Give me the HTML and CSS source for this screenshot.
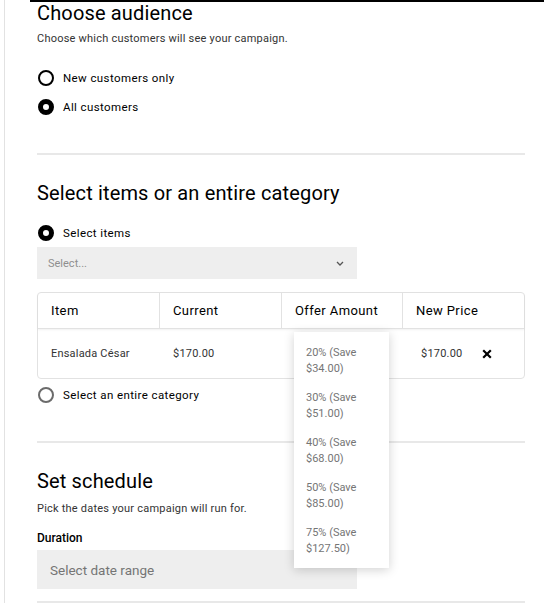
FILE: index.html
```html
<!DOCTYPE html>
<html>
<head>
<meta charset="utf-8">
<link rel="stylesheet" href="styles.css">
</head>
<body>
<div class="page">
  <div class="topbar"></div>

  <section class="section">
    <h2 class="title">Choose audience</h2>
    <p class="sub">Choose which customers will see your campaign.</p>
    <div class="radios">
      <label class="radio"><span class="dot"></span><span class="rlabel">New customers only</span></label>
      <label class="radio"><span class="dot on"></span><span class="rlabel">All customers</span></label>
    </div>
  </section>

  <div class="divider"></div>

  <section class="section">
    <h2 class="title t2">Select items or an entire category</h2>
    <label class="radio r-items"><span class="dot on"></span><span class="rlabel">Select items</span></label>
    <div class="select">
      <span class="ph">Select...</span>
      <svg class="chev" width="8" height="5" viewBox="0 0 8 5"><path d="M1 1l3 3 3-3" fill="none" stroke="#555" stroke-width="1.3"/></svg>
    </div>

    <div class="table">
      <div class="thead">
        <div class="th">Item</div>
        <div class="th">Current</div>
        <div class="th">Offer Amount</div>
        <div class="th">New Price</div>
      </div>
      <div class="trow">
        <div class="td">Ensalada César</div>
        <div class="td">$170.00</div>
        <div class="td offer">
          <div class="menu">
            <div class="opt">20% (Save $34.00)</div>
            <div class="opt">30% (Save $51.00)</div>
            <div class="opt">40% (Save $68.00)</div>
            <div class="opt">50% (Save $85.00)</div>
            <div class="opt">75% (Save $127.50)</div>
          </div>
        </div>
        <div class="td newp"><span>$170.00</span>
          <svg class="x" width="10" height="10" viewBox="0 0 10 10"><path d="M1.2 1.2l7.6 7.6M8.8 1.2l-7.6 7.6" stroke="#000" stroke-width="2.2" fill="none"/></svg>
        </div>
      </div>
    </div>

    <label class="radio r-cat"><span class="dot grey"></span><span class="rlabel">Select an entire category</span></label>
  </section>

  <div class="divider"></div>

  <section class="section">
    <h2 class="title t3">Set schedule</h2>
    <p class="sub s3">Pick the dates your campaign will run for.</p>
    <div class="flabel">Duration</div>
    <div class="input">Select date range</div>
  </section>

  <div class="divider d3"></div>
</div>
</body>
</html>
```

FILE: styles.css
```css
* { box-sizing: border-box; }
html, body { margin: 0; padding: 0; background: #fff; }
body { font-family: Roboto, "Liberation Sans", sans-serif; color: #000; }

.page {
  margin-left: 4px;
  border-left: 1px solid #e2e2e2;
  padding: 0 19px 0 32px;
  min-height: 603px;
  overflow: hidden;
}
.topbar { height: 2px; background: #000; margin-left: -7px; margin-right: -19px; }

.title { margin: 0; font-size: 20px; line-height: 22px; font-weight: 400; letter-spacing: 0.15px; }
.t2 { margin-top: 27px; }
.t3 { margin-top: 27px; }
.sub { margin: 7px 0 0; font-size: 11px; line-height: 16px; color: #333; letter-spacing: 0.22px; }
.s3 { margin-top: 9px; }

.radios { margin-top: 23px; display: flex; flex-direction: column; gap: 13px; }
.radio { display: flex; align-items: center; height: 16px; gap: 9px; }
.dot { width: 16px; height: 16px; border-radius: 50%; border: 2.5px solid #000; flex: none; margin-left: 1px; }
.dot.on { border-width: 5px; }
.dot.grey { border-color: #6b6b6b; }
.rlabel { font-size: 11.5px; line-height: 16px; font-weight: 400; letter-spacing: 0.4px; }

.divider { height: 2px; background: #e8e8e8; margin-top: 38px; }

.r-items { margin-top: 21px; }
.select {
  margin-top: 6px; width: 320px; height: 32px; background: #eeeeee;
  display: flex; align-items: center; justify-content: space-between;
  padding: 0 13px 0 11px;
}
.ph { font-size: 11px; color: #8e8e8e; }

.table {
  margin-top: 13px; border: 1px solid #e2e2e2; border-radius: 4px;
}
.thead, .trow { display: grid; grid-template-columns: 122px 122px 121px 1fr; }
.thead { height: 36px; border-bottom: 1px solid #e2e2e2; box-shadow: 0 1px 2px rgba(0,0,0,0.06); }
.th { display: flex; align-items: center; padding-left: 13px; font-size: 13px; border-right: 1px solid #e2e2e2; letter-spacing: 0.4px; }
.th:last-child { border-right: none; }
.trow { height: 49px; }
.td { display: flex; align-items: center; padding-left: 13px; font-size: 11px; color: #333; letter-spacing: 0.2px; }
.offer { position: relative; }
.newp { padding-left: 18px; gap: 20px; }
.x { flex: none; }

.menu {
  position: absolute; left: 12px; top: 3px; width: 95px;
  background: #fff; box-shadow: 0 2px 10px rgba(0,0,0,0.18);
  padding: 7px 0 4px; z-index: 5; letter-spacing: 0;
}
.opt { padding: 6px 12px 7px; font-size: 11px; line-height: 16px; color: #757575; }

.r-cat { margin-top: 8px; }

.flabel { margin-top: 13px; font-size: 12px; line-height: 16px; font-weight: 500; }
.input {
  margin-top: 4px; width: 320px; height: 39px; background: #eeeeee;
  display: flex; align-items: center; padding-left: 13px;
  font-size: 13.5px; color: #757575;
}
.d3 { margin-top: 12px; }
```
